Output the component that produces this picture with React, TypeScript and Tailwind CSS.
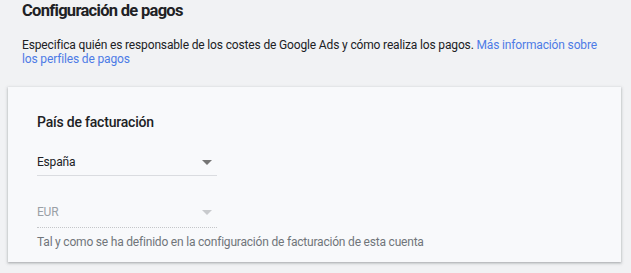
const Caret = ({ muted = false }: { muted?: boolean }) => (
  <svg width="10" height="5" viewBox="0 0 10 5" className="shrink-0">
    <path d="M0 0h10L5 5z" fill={muted ? '#c8cacd' : '#757575'} />
  </svg>
);

export default function App() {
  return (
    <div className="min-h-[273px] w-full bg-[#f1f2f4] pb-[10px] font-['Roboto',sans-serif] text-[#202124]">
      <div className="px-[22px]">
        <h1 className="text-[16.5px] leading-[22px] font-bold tracking-[-0.7px]">Configuración de pagos</h1>
        <p className="mt-[16px] text-[12px] leading-[14px] tracking-[-0.15px] text-[#202124]">
          Especifica quién es responsable de los costes de Google Ads y cómo realiza los pagos.{' '}
          <a href="#" className="text-[#4d7be6]">
            Más información sobre los perfiles de pagos
          </a>
        </p>
      </div>

      <section className="mx-[8px] mr-[10px] mt-[21px] bg-[#f8f9fb] px-[29px] pt-[25px] pb-[12px] shadow-[0_1px_2px_rgba(60,64,67,0.3),0_1px_3px_1px_rgba(60,64,67,0.12)]">
        <h2 className="text-[14px] leading-[20px] font-medium tracking-[-0.2px]">País de facturación</h2>

        <div className="mt-[20px] flex w-[180px] items-center justify-between border-b border-[#dadce0] pb-[3px] pr-[5px]">
          <span className="text-[12px] leading-[20px] tracking-[-0.2px]">España</span>
          <Caret />
        </div>

        <div className="mt-[26px] flex w-[180px] items-center justify-between border-b border-dotted border-[#c4c6c9] pb-[5px] pr-[5px]">
          <span className="text-[12px] leading-[20px] tracking-[-0.2px] text-[#9aa0a6]">EUR</span>
          <Caret muted />
        </div>

        <p className="mt-[6px] text-[12px] leading-[16px] tracking-[-0.2px] text-[#70757a]">
          Tal y como se ha definido en la configuración de facturación de esta cuenta
        </p>
      </section>
    </div>
  );
}
